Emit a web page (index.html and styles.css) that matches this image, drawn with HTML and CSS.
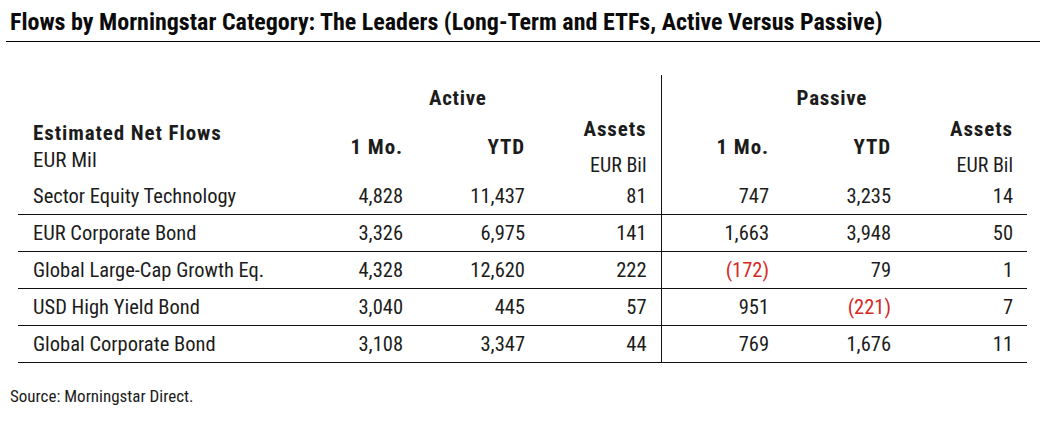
FILE: index.html
```html
<!DOCTYPE html>
<html>
<head>
<meta charset="utf-8">
<link rel="stylesheet" href="styles.css">
</head>
<body>
<div class="page">
  <h1 class="title">Flows by Morningstar Category: The Leaders (Long-Term and ETFs, Active Versus Passive)</h1>
  <table class="flows">
    <colgroup>
      <col class="c-name"><col class="c-num"><col class="c-num"><col class="c-num"><col class="c-num"><col class="c-num"><col class="c-num">
    </colgroup>
    <thead>
      <tr class="group-row">
        <th></th>
        <th colspan="3" class="group active-group divider">Active</th>
        <th colspan="3" class="group passive-group">Passive</th>
      </tr>
      <tr class="head-row">
        <th class="name-head"><span class="b">Estimated Net Flows</span><span class="unit">EUR Mil</span></th>
        <th class="num-head">1 Mo.</th>
        <th class="num-head">YTD</th>
        <th class="num-head assets divider"><span class="b">Assets</span><span class="unit">EUR Bil</span></th>
        <th class="num-head">1 Mo.</th>
        <th class="num-head">YTD</th>
        <th class="num-head assets"><span class="b">Assets</span><span class="unit">EUR Bil</span></th>
      </tr>
    </thead>
    <tbody>
      <tr><td class="name">Sector Equity Technology</td><td>4,828</td><td>11,437</td><td class="divider">81</td><td>747</td><td>3,235</td><td>14</td></tr>
      <tr><td class="name">EUR Corporate Bond</td><td>3,326</td><td>6,975</td><td class="divider">141</td><td>1,663</td><td>3,948</td><td>50</td></tr>
      <tr><td class="name">Global Large-Cap Growth Eq.</td><td>4,328</td><td>12,620</td><td class="divider">222</td><td class="neg">(172)</td><td>79</td><td>1</td></tr>
      <tr><td class="name">USD High Yield Bond</td><td>3,040</td><td>445</td><td class="divider">57</td><td>951</td><td class="neg">(221)</td><td>7</td></tr>
      <tr><td class="name">Global Corporate Bond</td><td>3,108</td><td>3,347</td><td class="divider">44</td><td>769</td><td>1,676</td><td>11</td></tr>
    </tbody>
  </table>
  <p class="source">Source: Morningstar Direct.</p>
</div>
</body>
</html>
```
FILE: styles.css
```css
html, body {
  margin: 0;
  padding: 0;
  background: #ffffff;
}
body {
  font-family: "Roboto Condensed", "Noto Sans", "DejaVu Sans Condensed", sans-serif;
  font-stretch: condensed;
  color: #1c1c1c;
}
.page {
  width: 1047px;
  height: 421px;
  overflow: hidden;
}
.title {
  margin: 0 7px 0 6px;
  padding: 8px 0 5px 4px;
  font-size: 24px;
  line-height: 28px;
  font-weight: bold;
  color: #0b0b0b;
  white-space: nowrap;
  border-bottom: 1px solid #000;
}
.flows {
  margin: 33px 0 0 18px;
  border-collapse: collapse;
  table-layout: fixed;
  width: 1009px;
  font-size: 20.5px;
}
.c-name { width: 277px; }
.c-num { width: 122px; }
th, td {
  padding: 0 14px 0 0;
  font-weight: normal;
  white-space: nowrap;
}
.b { font-weight: bold; display: block; }
.unit { display: block; font-weight: normal; letter-spacing: 0; }
.group-row th {
  height: 34px;
  padding-top: 6px;
  font-weight: bold;
  font-size: 21px;
  letter-spacing: 0.7px;
  text-align: center;
  vertical-align: middle;
}
.active-group { padding-right: 40px; }
.passive-group { padding-right: 25px; }
.head-row th {
  height: 63px;
  vertical-align: middle;
  font-weight: bold;
  font-size: 21px;
  letter-spacing: 0.9px;
  line-height: 26px;
}
.name-head {
  text-align: left;
  padding-left: 15px;
}
.name-head .b { line-height: 26px; }
.name-head .unit { font-size: 21px; line-height: 26px; margin-top: 1px; }
.num-head { text-align: right; }
.assets .b { line-height: 26px; }
.assets .unit { font-size: 20px; line-height: 26px; margin-top: 10px; }
.divider { border-right: 1px solid #111; }
tbody td {
  height: 36px;
  text-align: right;
  border-bottom: 1px solid #111;
  vertical-align: middle;
}
tbody td.name {
  text-align: left;
  padding-left: 15px;
}
.neg { color: #d42a26; }
.source {
  margin: 23px 0 0 10px;
  font-size: 17px;
}
```
